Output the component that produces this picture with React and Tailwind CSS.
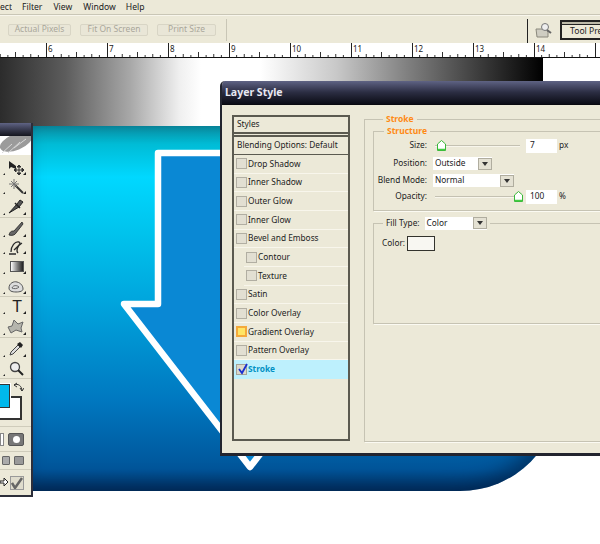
import React from "react";

const FONT = "[font-family:'Noto_Sans','Liberation_Sans',sans-serif]";

function Ticks() {
  const items = [];
  for (let i = 0; i < 90; i++) {
    const x = -15 + i * 7.625;
    const h = i % 8 === 0 ? 0 : i % 4 === 0 ? 5 : i % 2 === 0 ? 3 : 2;
    if (h) items.push(<line key={i} x1={x} x2={x} y1={14 - h} y2={14} stroke="#333" strokeWidth="1" />);
  }
  return (
    <svg width="600" height="14" className="absolute left-0 top-0" aria-hidden="true">
      {items}
    </svg>
  );
}

function Ruler() {
  const nums = [6, 7, 8, 9, 10, 11, 12, 13, 14];
  return (
    <div className="relative h-[15px] bg-white border-b border-[#111] overflow-hidden shrink-0">
      <Ticks />
      <div className="flex ml-[46px]">
        {nums.map((n) => (
          <div key={n} className="w-[61px] shrink-0 h-[14px] border-l border-[#222] pl-px text-[8px] leading-[11px] text-[#222]">
            {n}
          </div>
        ))}
        <div className="w-[4px] shrink-0 h-[14px] border-l border-[#222]" />
      </div>
    </div>
  );
}

function DisabledBtn({ w, children }) {
  return (
    <div className={`${w} h-[12px] mr-[9px] shrink-0 flex items-center justify-center rounded-[2px] bg-[#e9e6d7] border border-[#d8d5c5] text-[8.5px] text-[#a9a69a] whitespace-nowrap`}>
      {children}
    </div>
  );
}

function Tri() {
  return <span className="absolute right-[5px] bottom-[2px] w-0 h-0 border-l-[3px] border-l-transparent border-b-[3px] border-b-[#222]" />;
}

function Tool({ h, children, tri = true }) {
  return (
    <div className={`${h} relative flex items-center justify-end pr-[7px] shrink-0`}>
      <span className="absolute left-[3px] bottom-[2px] w-0 h-0 border-l-[2px] border-l-transparent border-b-[2px] border-b-[#222]" />
      {children}
      {tri && <Tri />}
    </div>
  );
}

const Sep = () => <div className="h-px bg-[#cfccbb] shrink-0" />;

function Toolbox() {
  return (
    <div className="absolute left-0 top-[65px] w-[33px] h-[374px] bg-[#ece9d8] border-r-2 border-b-2 border-[#2c2e3a] flex flex-col overflow-hidden">
      <div className="h-[13px] shrink-0 bg-gradient-to-b from-[#5f6384] to-[#15161f]" />
      <div className="h-[19px] shrink-0 bg-white overflow-hidden">
        <svg width="31" height="19" aria-hidden="true">
          <ellipse cx="16" cy="6" rx="17" ry="8" transform="rotate(-22 16 6)" fill="#9b9b9b" />
          <path d="M2 17L12 8M8 17L20 6M14 12L26 3" stroke="#d8d8d8" strokeWidth="1" />
        </svg>
      </div>
      <div className="h-[3px] shrink-0" />
      <Tool h="h-[19px]">
        <svg width="16" height="15" aria-hidden="true">
          <path d="M1 1L1 9L3 7L8 9L8 6Z" fill="#222" />
          <path d="M11 6V14M7 10H15M11 5L9 7H13ZM11 15L9 13H13ZM6 10L8 8V12ZM16 10L14 8V12Z" stroke="#333" fill="#333" strokeWidth="1" />
        </svg>
      </Tool>
      <Tool h="h-[19px]">
        <svg width="15" height="15" aria-hidden="true">
          <path d="M6 6L14 14" stroke="#333" strokeWidth="2" />
          <path d="M5 0V10M0 5H10M2 2L8 8M8 2L2 8" stroke="#777" strokeWidth="1" />
        </svg>
      </Tool>
      <Tool h="h-[21px]">
        <svg width="16" height="15" aria-hidden="true">
          <path d="M1 14L9 5L12 1L15 3L11 8Z" fill="#555" stroke="#222" strokeWidth="1" />
          <path d="M7 4L12 9" stroke="#222" strokeWidth="1.5" />
        </svg>
      </Tool>
      <Sep />
      <Tool h="h-[21px]">
        <svg width="16" height="15" aria-hidden="true">
          <path d="M1 14C2 10 4 10 6 10L14 1L15 3L8 12C7 14 4 15 1 14Z" fill="#666" stroke="#222" strokeWidth="0.8" />
        </svg>
      </Tool>
      <Tool h="h-[17px]">
        <svg width="16" height="15" aria-hidden="true">
          <path d="M3 12C3 6 7 1 11 2C14 3 9 7 6 10M10 13C8 11 9 6 14 3M1 14H8" stroke="#2a2a2a" strokeWidth="1.3" fill="none" />
        </svg>
      </Tool>
      <Tool h="h-[20px]">
        <div className="w-[14px] h-[11px] bg-gradient-to-r from-white to-[#222] border border-[#555]" />
      </Tool>
      <Tool h="h-[20px]">
        <svg width="16" height="13" aria-hidden="true">
          <path d="M1 8C1 3 6 1 9 2C13 3 15 6 15 9C15 11 12 12 8 12C4 12 1 11 1 8Z" fill="#ddd" stroke="#555" strokeWidth="1" />
          <path d="M4 8C5 5 9 5 11 7C9 9 6 9 4 8Z" fill="none" stroke="#666" strokeWidth="1" />
        </svg>
      </Tool>
      <Sep />
      <Tool h="h-[19px]">
        <span className="text-[16px] leading-none [font-family:'Liberation_Sans',sans-serif] text-[#222] mr-[2px]">T</span>
      </Tool>
      <Tool h="h-[21px]">
        <svg width="17" height="15" aria-hidden="true">
          <path d="M1 8L5 7L7 1L11 5L16 3L14 9L15 13L9 11L4 14Z" fill="#b5b5ad" stroke="#666" strokeWidth="1" />
        </svg>
      </Tool>
      <Sep />
      <Tool h="h-[21px]">
        <svg width="15" height="15" aria-hidden="true">
          <path d="M1 14L2 11L9 4L11 6L4 13Z" fill="#ddd" stroke="#444" strokeWidth="1" />
          <path d="M8 3L12 7L14 4L11 1Z" fill="#222" />
        </svg>
      </Tool>
      <Tool h="h-[19px]" tri={false}>
        <svg width="15" height="15" aria-hidden="true">
          <circle cx="6" cy="6" r="4.5" fill="#eee" stroke="#444" strokeWidth="1.3" />
          <path d="M9 9L14 14" stroke="#222" strokeWidth="2" />
        </svg>
      </Tool>
      <Sep />
      <div className="relative h-[47px] shrink-0">
        <div className="absolute left-[-3px] top-[17px] w-[25px] h-[24px] bg-white border-2 border-[#333]" />
        <div className="absolute left-[-3px] top-[5px] w-[13px] h-[24px] bg-[#00b8ec] border border-[#333] shadow-[0_0_0_1px_#fff]" />
        <svg width="11" height="11" className="absolute left-[13px] top-[3px]" aria-hidden="true">
          <path d="M1 3C5 1 9 4 9 9M1 3L4 1M1 3L4 5M9 9L7 6M9 9L11 6" stroke="#333" fill="none" strokeWidth="1" />
        </svg>
      </div>
      <Sep />
      <div className="h-[24px] shrink-0 flex items-center">
        <div className="w-[4px] h-[13px] bg-white border border-[#888]" />
        <div className="w-[16px] h-[13px] ml-[4px] rounded-[2px] bg-[#777] border border-[#555] flex items-center justify-center">
          <div className="w-[7px] h-[7px] rounded-full bg-white" />
        </div>
      </div>
      <Sep />
      <div className="h-[17px] shrink-0 flex items-center gap-[4px] pl-[2px]">
        <div className="w-[8px] h-[9px] rounded-[1px] bg-[#aaa] border border-[#666]" />
        <div className="w-[10px] h-[9px] rounded-[1px] bg-[#999] border border-[#666]" />
      </div>
      <Sep />
      <div className="flex-1 flex items-center gap-[2px]">
        <svg width="8" height="13" aria-hidden="true">
          <path d="M0 5H4V2L8 6L4 10V7H0Z" fill="#fff" stroke="#222" strokeWidth="1" />
        </svg>
        <div className="w-[14px] h-[14px] bg-[#dfdccd] border border-[#999] flex items-center justify-center">
          <svg width="12" height="12" aria-hidden="true">
            <path d="M1 6L4 11L11 1" stroke="#666" strokeWidth="2.5" fill="none" />
          </svg>
        </div>
      </div>
    </div>
  );
}

function Arrow() {
  return (
    <svg width="527" height="365" className="absolute left-0 top-0" aria-hidden="true">
      <polygon
        points="125,27 125,178 91,178 217,341 343,178 309,178 309,27"
        fill="#0a88d4"
        stroke="#fff"
        strokeWidth="6.5"
        strokeLinejoin="round"
      />
    </svg>
  );
}

function Check({ state }) {
  if (state === "orange")
    return <span className="w-[11px] h-[11px] shrink-0 bg-[#ffe565] border-2 border-[#f4a93a]" />;
  if (state === "on")
    return (
      <span className="relative w-[11px] h-[11px] shrink-0 bg-[#dcd9cc] border border-[#a5a397]">
        <svg width="12" height="13" className="absolute left-0 top-[-3px]" aria-hidden="true">
          <path d="M2 7L5 11L10 2" stroke="#1a2fd0" strokeWidth="1.8" fill="none" />
        </svg>
      </span>
    );
  return <span className="w-[11px] h-[11px] shrink-0 bg-[#e2dfd2] border border-[#b1aea2]" />;
}

function Row({ label, sub, state, active }) {
  return (
    <div
      className={`h-[18.67px] flex items-center shrink-0 pl-[2px] border-b whitespace-nowrap ${
        active ? "bg-[#bdf0fd] border-[#bdf0fd] text-[#0090c4] font-bold" : "border-[#f8f6ec]"
      } ${sub ? "ml-[10px]" : ""}`}
    >
      <Check state={state} />
      <span className="ml-px">{label}</span>
    </div>
  );
}

function StyleList() {
  const rows = [
    ["Drop Shadow"],
    ["Inner Shadow"],
    ["Outer Glow"],
    ["Inner Glow"],
    ["Bevel and Emboss"],
    ["Contour", true],
    ["Texture", true],
    ["Satin"],
    ["Color Overlay"],
    ["Gradient Overlay", false, "orange"],
    ["Pattern Overlay"],
  ];
  return (
    <div className="w-[118px] h-[326px] shrink-0 border-2 border-[#5b5a50] flex flex-col text-[8.3px] text-[#222]">
      <div className="h-[17px] flex items-center pl-[3px] border-b-2 border-[#5b5a50] shrink-0">Styles</div>
      <div className="h-[20px] mt-px flex items-center pl-[3px] border-t-2 border-b border-t-[#5b5a50] border-b-[#5b5a50] shrink-0 whitespace-nowrap">
        Blending Options: Default
      </div>
      {rows.map(([l, s, st]) => (
        <Row key={l} label={l} sub={s} state={st} />
      ))}
      <Row label="Stroke" state="on" active />
    </div>
  );
}

function Select({ w, value }) {
  return (
    <div className={`${w} h-[13px] bg-white flex items-center justify-between pl-[2px] text-[8.3px] text-[#222]`}>
      <span>{value}</span>
      <span className="w-[14px] h-[12px] bg-[#e4e1d3] border border-[#b0ad9f] flex items-center justify-center">
        <span className="w-0 h-0 border-x-[3.5px] border-x-transparent border-t-[4px] border-t-[#333]" />
      </span>
    </div>
  );
}

function Slider({ pos }) {
  return (
    <div className="relative w-[85px] h-[13px] ml-[7px] flex items-center">
      <div className="w-full h-[2px] bg-[#c4c1b2] border-b border-[#f8f6ec]" />
      <svg width="9" height="11" className={`absolute top-[1px] ${pos}`} aria-hidden="true">
        <path d="M4.5 .5L8.5 4V10.5H.5V4Z" fill="#fff" stroke="#38b838" strokeWidth="1" />
        <path d="M1 9.5H8" stroke="#44cc44" strokeWidth="1.5" />
      </svg>
    </div>
  );
}

const Label = ({ children }) => <span className="w-[54px] shrink-0 text-right pr-[1px] whitespace-nowrap">{children}:</span>;

const Num = ({ v }) => (
  <div className="w-[31px] h-[14px] ml-[6px] bg-white flex items-center pl-[4px] text-[8.3px]">{v}</div>
);

function Panel() {
  return (
    <div className="w-[300px] shrink-0 ml-[14px] mt-[-2px] text-[8.3px] text-[#222]">
      <fieldset className="h-[329px] border border-[#c6c3b3] pl-[8px] shadow-[1px_1px_0_#fbfaf2]">
        <legend className="ml-[10px] px-[3px] text-[8.5px] font-bold text-[#ff8a14] leading-[12px]">Stroke</legend>
        <fieldset className="h-[86px] border border-[#c6c3b3] shadow-[1px_1px_0_#fbfaf2]">
          <legend className="ml-[10px] px-[3px] text-[8.5px] font-bold text-[#ff8a14] leading-[12px]">Structure</legend>
          <div className="flex items-center h-[17px]">
            <Label>Size</Label>
            <Slider pos="left-[2px]" />
            <Num v="7" />
            <span className="ml-[2px]">px</span>
          </div>
          <div className="flex items-center h-[17px] mt-px">
            <Label>Position</Label>
            <div className="ml-[5px]"><Select w="w-[59px]" value="Outside" /></div>
          </div>
          <div className="flex items-center h-[17px]">
            <Label>Blend Mode</Label>
            <div className="ml-[5px]"><Select w="w-[81px]" value="Normal" /></div>
          </div>
          <div className="flex items-center h-[15px]">
            <Label>Opacity</Label>
            <Slider pos="right-[-3px]" />
            <Num v="100" />
            <span className="ml-[2px]">%</span>
          </div>
        </fieldset>
        <fieldset className="h-[108px] mt-[5px] border border-[#c6c3b3] shadow-[1px_1px_0_#fbfaf2]">
          <legend className="ml-[9px] px-[3px] leading-[14px]">
            <span className="flex items-center gap-[5px] whitespace-nowrap">
              Fill Type:
              <Select w="w-[62px]" value="Color" />
            </span>
          </legend>
          <div className="flex items-center mt-[6px] ml-[8px]">
            <span>Color:</span>
            <div className="w-[28px] h-[15px] ml-[2px] bg-[#f8f7f2] border border-[#33332d]" />
          </div>
        </fieldset>
      </fieldset>
    </div>
  );
}

function Dialog() {
  return (
    <div className="absolute left-[220px] top-[23px] w-[380px] h-[375px] rounded-tl-[5px] overflow-hidden bg-[#ece9d8] border-l-2 border-b-[3px] border-[#23252f] flex flex-col">
      <div className="h-[24px] shrink-0 bg-gradient-to-b from-[#5f6384] via-[#2b2d42] to-[#0c0d16] flex items-center pl-[3px] text-[10.5px] font-bold text-[#e8e8f2] border-b border-[#0a0a10]">
        Layer Style
      </div>
      <div className="flex-1 flex pl-[10px] pt-[10px] bg-[#ece9d8]">
        <StyleList />
        <Panel />
      </div>
    </div>
  );
}

function Canvas() {
  return (
    <div className="relative flex-1 bg-white overflow-hidden">
      <div className="absolute left-0 top-0 w-[543px] h-[68px] bg-[linear-gradient(to_right,#2c2c2c_0%,#5c5c5c_12%,#a8a8a8_24%,#efefef_33%,#fff_37%,#fff_48%,#c8c8c8_62%,#808080_75%,#333_90%,#000_100%)]" />
      <div className="absolute left-[33px] top-[68px] w-[527px] h-[365px] rounded-br-[100px] overflow-hidden bg-[linear-gradient(to_bottom,#0a93a6_0%,#00bcd6_5%,#00d8ff_14%,#00c2ec_30%,#00a5dd_48%,#0078c0_75%,#00559a_94%,#00356a_100%)] shadow-[inset_-8px_-6px_18px_rgba(0,25,60,0.55)]">
        <Arrow />
      </div>
      <Toolbox />
      <Dialog />
    </div>
  );
}

export default function App() {
  return (
    <div className={`w-[600px] h-[544px] overflow-hidden flex flex-col bg-white ${FONT}`}>
      <div className="h-[14px] bg-[#ece9d8] flex items-center text-[8.6px] text-[#222] shrink-0 border-b border-[#c9c6b6] box-content whitespace-nowrap">
        <span className="w-[12px] overflow-hidden flex justify-end shrink-0">Select</span>
        <span className="ml-[10px]">Filter</span>
        <span className="ml-[11px]">View</span>
        <span className="ml-[11px]">Window</span>
        <span className="ml-[10px]">Help</span>
      </div>
      <div className="h-[28px] bg-[#ece9d8] border-t border-[#f8f6ec] flex items-center pl-[8px] shrink-0 overflow-hidden">
        <DisabledBtn w="w-[63px]">Actual Pixels</DisabledBtn>
        <DisabledBtn w="w-[68px]">Fit On Screen</DisabledBtn>
        <DisabledBtn w="w-[59px]">Print Size</DisabledBtn>
        <div className="w-px h-[22px] ml-[1px] bg-[#c9c6b6] shrink-0" />
        <div className="w-px h-[25px] ml-[300px] mt-[3px] bg-[#222] shrink-0" />
        <svg width="18" height="16" className="ml-[7px] shrink-0" aria-hidden="true">
          <path d="M1 7H11L13 10V15H2Z" fill="#cfcdc2" stroke="#8a887c" />
          <circle cx="10" cy="5" r="3.5" fill="#eee" stroke="#777" />
          <path d="M12 8L16 11" stroke="#666" strokeWidth="2" />
        </svg>
        <div className="w-[60px] h-[20px] ml-[7px] shrink-0 border-2 border-r-0 border-[#222] flex flex-col bg-[#ece9d8] overflow-hidden">
          <div className="h-[4px] bg-[#bdbaa9] border-b border-[#222]" />
          <div className="flex-1 pl-[8px] text-[8.6px] leading-[13px] text-[#222] whitespace-nowrap">Tool Presets</div>
        </div>
      </div>
      <Ruler />
      <Canvas />
    </div>
  );
}
